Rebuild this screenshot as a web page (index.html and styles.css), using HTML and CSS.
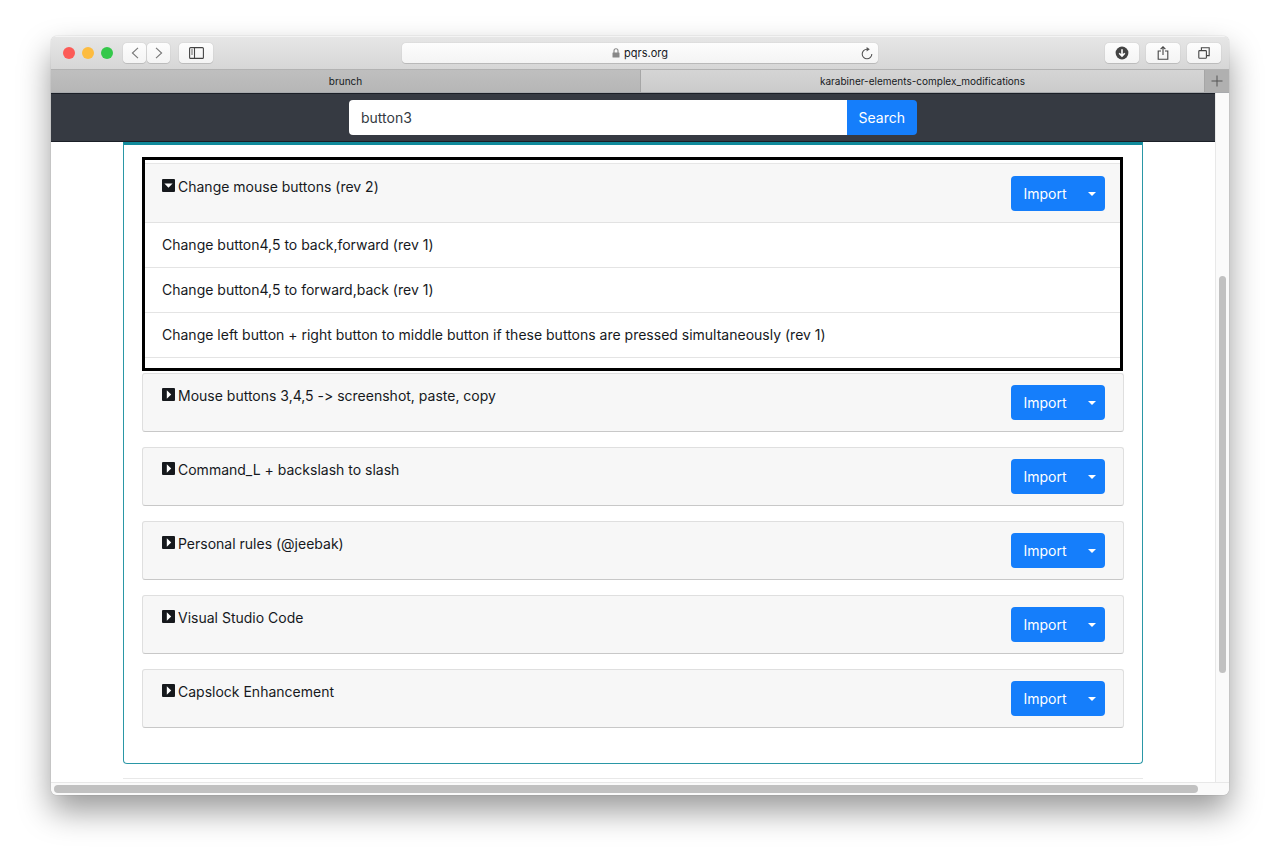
FILE: index.html
```html
<!DOCTYPE html>
<html lang="en">
<head>
    <meta charset="UTF-8">
    <meta name="viewport" content="width=device-width, initial-scale=1.0">
    <title>karabiner-elements-complex_modifications</title>
    <link rel="stylesheet" href="styles.css">
</head>
<body>
<div class="window">
    <header class="toolbar">
        <div class="toolbar-left">
            <div class="lights">
                <span class="light red"></span>
                <span class="light yellow"></span>
                <span class="light green"></span>
            </div>
            <div class="nav-buttons">
                <button class="tool nav" type="button" aria-label="Back">
                    <svg width="8" height="12" viewBox="0 0 8 12"><path d="M7 .8L1.4 6 7 11.2"/></svg>
                </button>
                <button class="tool nav" type="button" aria-label="Forward">
                    <svg width="8" height="12" viewBox="0 0 8 12"><path d="M1 .8L6.6 6 1 11.2"/></svg>
                </button>
            </div>
            <button class="tool" type="button" aria-label="Sidebar">
                <svg width="15" height="12" viewBox="0 0 15 12"><rect x=".6" y=".6" width="13.8" height="10.8" rx="1"/><path d="M5.5 1v10M2.2 3h1.6M2.2 5h1.6M2.2 7h1.6"/></svg>
            </button>
        </div>
        <div class="address">
            <span class="host">
                <svg width="8" height="10" viewBox="0 0 8 10"><path d="M2 5V2.8a2 2 0 0 1 4 0V5" fill="none" stroke="#888" stroke-width="1.1"/><rect x=".5" y="4.5" width="7" height="5" rx=".6" fill="#888"/></svg>
                pqrs.org
            </span>
            <button class="reload" type="button" aria-label="Reload">
                <svg width="12" height="13" viewBox="0 0 12 13"><path d="M6 2.2a4.8 4.8 0 1 0 4.8 4.8" fill="none" stroke="#555" stroke-width="1.1"/><path d="M5.6 0l3.2 2.3-3.2 2.3z" fill="#555"/></svg>
            </button>
        </div>
        <div class="toolbar-right">
            <button class="tool" type="button" aria-label="Downloads">
                <svg width="14" height="14" viewBox="0 0 14 14"><circle cx="7" cy="7" r="6.4" fill="#444" stroke="none"/><path d="M7 3.2v6.6M4.2 7.2L7 10l2.8-2.8" stroke="#fff" stroke-width="1.6"/></svg>
            </button>
            <button class="tool" type="button" aria-label="Share">
                <svg width="12" height="14" viewBox="0 0 12 14"><path d="M4 5H1.2v8.2h9.6V5H8M6 9V1M3.6 3.2L6 .8l2.4 2.4"/></svg>
            </button>
            <button class="tool" type="button" aria-label="Show tabs">
                <svg width="12" height="12" viewBox="0 0 12 12"><rect x=".8" y="3.6" width="7.6" height="7.6" rx=".8"/><path d="M3.4 3.4V.8h7.8v7.8H8.6"/></svg>
            </button>
        </div>
    </header>
    <nav class="tabs">
        <a class="tab" href="#">brunch</a>
        <a class="tab active" href="#">karabiner-elements-complex_modifications</a>
        <button class="new-tab" type="button" aria-label="New tab">
            <svg width="12" height="12" viewBox="0 0 12 12"><path d="M6 .5v11M.5 6h11"/></svg>
        </button>
    </nav>

    <div class="viewport">
        <main class="page">
            <div class="navbar">
                <form class="search">
                    <input class="search-input" type="text" value="button3" aria-label="Search">
                    <button class="search-button" type="button">Search</button>
                </form>
            </div>
            <div class="container">
                <div class="results">
                    <section class="highlight">
                        <div class="card-header">
                            <a class="card-title" href="#">
                                <svg width="13" height="13" viewBox="0 0 13 13"><rect width="13" height="13" rx="1"/><path d="M2.4 4.4h8.2L6.5 8.8z" fill="#fff"/></svg>
                                Change mouse buttons (rev 2)
                            </a>
                            <div class="btn-group">
                                <button class="import" type="button">Import</button>
                                <button class="toggle" type="button" aria-label="More"></button>
                            </div>
                        </div>
                        <ul class="rules">
                            <li>Change button4,5 to back,forward (rev 1)</li>
                            <li>Change button4,5 to forward,back (rev 1)</li>
                            <li>Change left button + right button to middle button if these buttons are pressed simultaneously (rev 1)</li>
                        </ul>
                    </section>
                    <section class="card">
                        <a class="card-title" href="#">
                            <svg width="13" height="13" viewBox="0 0 13 13"><rect width="13" height="13" rx="1"/><path d="M4.8 2.2v8.6l4.4-4.3z" fill="#fff"/></svg>
                            Mouse buttons 3,4,5 -&gt; screenshot, paste, copy
                        </a>
                        <div class="btn-group">
                            <button class="import" type="button">Import</button>
                            <button class="toggle" type="button" aria-label="More"></button>
                        </div>
                    </section>
                    <section class="card">
                        <a class="card-title" href="#">
                            <svg width="13" height="13" viewBox="0 0 13 13"><rect width="13" height="13" rx="1"/><path d="M4.8 2.2v8.6l4.4-4.3z" fill="#fff"/></svg>
                            Command_L + backslash to slash
                        </a>
                        <div class="btn-group">
                            <button class="import" type="button">Import</button>
                            <button class="toggle" type="button" aria-label="More"></button>
                        </div>
                    </section>
                    <section class="card">
                        <a class="card-title" href="#">
                            <svg width="13" height="13" viewBox="0 0 13 13"><rect width="13" height="13" rx="1"/><path d="M4.8 2.2v8.6l4.4-4.3z" fill="#fff"/></svg>
                            Personal rules (@jeebak)
                        </a>
                        <div class="btn-group">
                            <button class="import" type="button">Import</button>
                            <button class="toggle" type="button" aria-label="More"></button>
                        </div>
                    </section>
                    <section class="card">
                        <a class="card-title" href="#">
                            <svg width="13" height="13" viewBox="0 0 13 13"><rect width="13" height="13" rx="1"/><path d="M4.8 2.2v8.6l4.4-4.3z" fill="#fff"/></svg>
                            Visual Studio Code
                        </a>
                        <div class="btn-group">
                            <button class="import" type="button">Import</button>
                            <button class="toggle" type="button" aria-label="More"></button>
                        </div>
                    </section>
                    <section class="card">
                        <a class="card-title" href="#">
                            <svg width="13" height="13" viewBox="0 0 13 13"><rect width="13" height="13" rx="1"/><path d="M4.8 2.2v8.6l4.4-4.3z" fill="#fff"/></svg>
                            Capslock Enhancement
                        </a>
                        <div class="btn-group">
                            <button class="import" type="button">Import</button>
                            <button class="toggle" type="button" aria-label="More"></button>
                        </div>
                    </section>
                </div>
                <hr class="divider">
            </div>
        </main>
        <div class="scroll-y"><div class="thumb"></div></div>
    </div>
    <div class="scroll-x"><div class="thumb"></div></div>
</div>
</body>
</html>
```
FILE: styles.css
```css
* {
    box-sizing: border-box;
}
body {
    margin: 0;
    padding: 36px 51px 60px;
    background: #fff;
    color: #16191d;
    font-family: Inter, "Liberation Sans", sans-serif;
    font-size: 14px;
    line-height: 22px;
    font-variant-ligatures: none;
}
button, input {
    font: inherit;
    margin: 0;
    border: 0;
}
a {
    color: inherit;
    text-decoration: none;
}
svg {
    display: block;
    flex: none;
}

/* browser window */
.window {
    border-radius: 6px;
    overflow: hidden;
    background: #fff;
    box-shadow: 0 0 1px rgba(0, 0, 0, 0.4), 0 16px 32px rgba(0, 0, 0, 0.4);
}
.toolbar {
    display: grid;
    grid-template-columns: 1fr 476px 1fr;
    align-items: center;
    height: 33px;
    padding: 0 8px;
    background: linear-gradient(#e6e6e6, #d6d6d6);
    border-top: 1px solid #f4f4f4;
}
.toolbar-left, .toolbar-right, .lights, .nav-buttons {
    display: flex;
    align-items: center;
}
.toolbar-right {
    justify-content: flex-end;
    gap: 7px;
}
.lights {
    gap: 7px;
    margin: 0 10px 0 4px;
}
.light {
    width: 12px;
    height: 12px;
    border-radius: 50%;
}
.red { background: #fc5b57; }
.yellow { background: #fdbc40; }
.green { background: #34c84a; }
.nav-buttons {
    gap: 1px;
    margin-right: 9px;
}
.tool {
    display: flex;
    align-items: center;
    justify-content: center;
    width: 34px;
    height: 20px;
    padding: 0;
    border-radius: 4px;
    background: linear-gradient(#fdfdfd, #f4f4f4);
    box-shadow: 0 0 1px rgba(0, 0, 0, 0.3), 0 1px 0 rgba(0, 0, 0, 0.1);
}
.tool svg {
    fill: none;
    stroke: #444;
    stroke-width: 1.1;
}
.nav {
    width: 23px;
}
.nav svg {
    stroke: #777;
}
.address {
    display: flex;
    align-items: center;
    height: 20px;
    padding: 0 5px 0 17px;
    border-radius: 4px;
    background: linear-gradient(#fdfdfd, #f4f4f4);
    box-shadow: 0 0 1px rgba(0, 0, 0, 0.25), 0 1px 0 rgba(0, 0, 0, 0.12);
    font-size: 11px;
}
.host {
    flex: 1;
    display: flex;
    align-items: center;
    justify-content: center;
    gap: 4px;
}
.reload {
    padding: 0;
    background: none;
}
.tabs {
    display: grid;
    grid-template-columns: 50% 1fr 24px;
    height: 24px;
    border-top: 1px solid #b2b2b2;
    border-bottom: 1px solid #a8aaad;
    background: linear-gradient(#bfbfbf, #b6b6b6);
    font-size: 10px;
    line-height: 22px;
    text-align: center;
}
.tab.active {
    border-left: 1px solid #a6a6a6;
    border-right: 1px solid #a6a6a6;
    background: linear-gradient(#d5d5d5, #cbcbcb);
}
.new-tab {
    display: flex;
    align-items: center;
    justify-content: center;
    padding: 0;
    background: #b0b0b0;
}
.new-tab svg {
    stroke: #555;
}

/* page */
.viewport {
    display: flex;
}
.page {
    flex: 1;
    min-width: 0;
}
.navbar {
    display: flex;
    justify-content: center;
    padding: 6px 16px;
    background: #363a42;
    border-top: 1px solid #1b1f27;
    border-bottom: 1px solid #1b1f27;
}
.search {
    display: flex;
    width: 568px;
    height: 35px;
}
.search-input {
    flex: 1;
    min-width: 0;
    padding: 0 12px;
    border-radius: 4px 0 0 4px;
    background: #fff;
    color: #343a42;
}
.search-button, .import, .toggle {
    background: #157efb;
    color: #fff;
}
.search-button {
    padding: 0 12px;
    border-radius: 0 4px 4px 0;
}
.container {
    max-width: 1020px;
    margin: 0 auto;
}
.results {
    padding: 12px 18px 35px;
    border: 1px solid #2a97a6;
    border-top: 3px solid #108a9b;
    border-radius: 0 0 4px 4px;
}
.highlight {
    margin: 0 1px 2px 0;
    padding: 3px 0 10px;
    border: 3px solid #000;
}
.card-header, .card {
    display: flex;
    justify-content: space-between;
    background: #f7f7f7;
}
.card-header {
    padding: 12px 15px 11px 17px;
    border-top: 1px solid #e6e6e6;
    border-bottom: 1px solid #e2e2e2;
}
.card {
    padding: 11px 18px 11px 19px;
    border: 1px solid #dfdfdf;
    border-bottom-color: #c8c8c8;
    border-radius: 3px;
}
.card + .card {
    margin-top: 15px;
}
.card-title {
    display: flex;
    gap: 3px;
}
.card-title svg {
    margin-top: 3px;
    fill: #16191d;
}
.rules {
    margin: 0;
    padding: 0;
    list-style: none;
}
.rules li {
    padding: 11px 17px;
    border-bottom: 1px solid #e4e4e4;
}
.btn-group {
    display: flex;
    height: 35px;
}
.import {
    width: 68px;
    padding: 0;
    border-radius: 4px 0 0 4px;
}
.toggle {
    display: flex;
    align-items: center;
    justify-content: center;
    width: 26px;
    padding: 0;
    border-radius: 0 4px 4px 0;
}
.toggle::after {
    content: "";
    border-top: 4px solid #fff;
    border-left: 4px solid transparent;
    border-right: 4px solid transparent;
}
.divider {
    height: 1px;
    margin: 14px 0 3px;
    border: 0;
    background: #e8e8e8;
}

/* scrollbars */
.scroll-y, .scroll-x {
    display: flex;
    background: #fafafa;
}
.scroll-y {
    flex-direction: column;
    width: 14px;
    padding: 0 2px;
    border-left: 1px solid #e8e8e8;
}
.scroll-x {
    height: 13px;
    padding: 2px 31px 2px 3px;
    border-top: 1px solid #e8e8e8;
}
.thumb {
    border-radius: 4px;
    background: #c1c1c1;
}
.scroll-y .thumb {
    flex: 396;
    margin: 0 1px;
}
.scroll-y::before {
    content: "";
    flex: 183;
}
.scroll-y::after {
    content: "";
    flex: 109;
}
.scroll-x .thumb {
    width: 100%;
    height: 8px;
}
```
